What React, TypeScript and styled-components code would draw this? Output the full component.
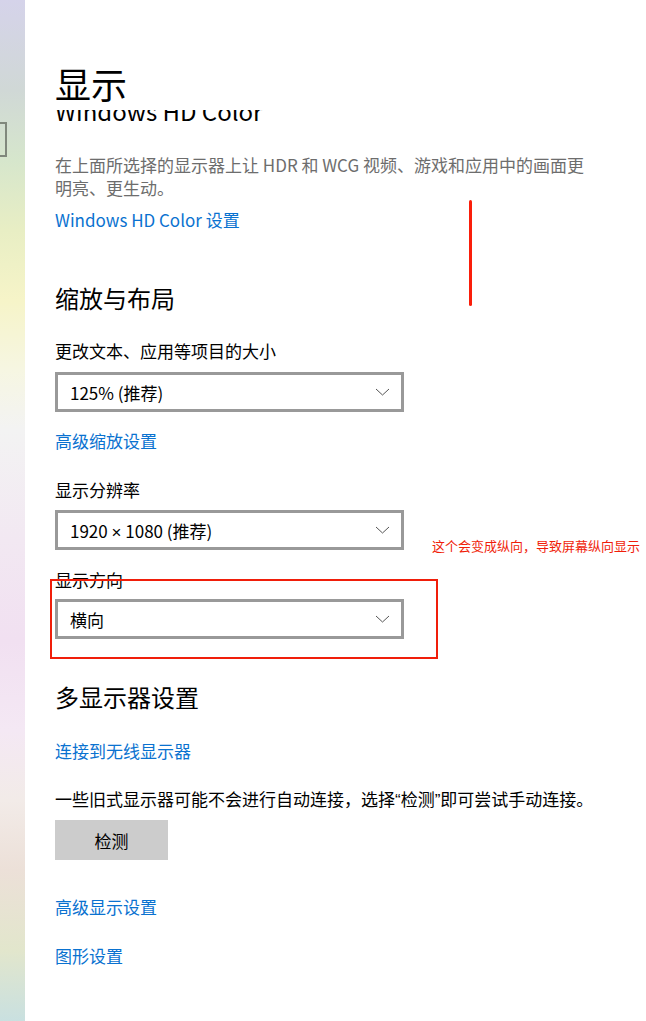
import React from "react";
import styled, { createGlobalStyle } from "styled-components";

const GlobalStyle = createGlobalStyle`
  html, body {
    margin: 0;
    padding: 0;
    background: #ffffff;
  }
  body {
    font-family: "Noto Sans CJK SC", "Liberation Sans", sans-serif;
    color: #000;
  }
`;

type SelectProps = { children: React.ReactNode; $mt: number };

const Chevron = () => (
  <svg width="15" height="8" viewBox="0 0 15 8">
    <polyline points="1,1 7.5,7 14,1" fill="none" stroke="#555" strokeWidth="1" />
  </svg>
);

const Dropdown = ({ children, $mt }: SelectProps) => (
  <Select $mt={$mt}>
    <span>{children}</span>
    <Chevron />
  </Select>
);

const App = () => {
  return (
    <Page>
      <GlobalStyle />
      <Wallpaper>
        <WindowEdge />
      </Wallpaper>
      <Main>
        <PageTitle>显示</PageTitle>
        <Viewport>
          <Content>
            <SectionTitle $mt={0}>Windows HD Color</SectionTitle>
            <Description $mt={26}>
              在上面所选择的显示器上让 HDR 和 WCG 视频、游戏和应用中的画面更明亮、更生动。
            </Description>
            <Link $mt={9}>Windows HD Color 设置</Link>

            <SectionTitle $mt={51}>缩放与布局</SectionTitle>
            <Label $mt={25}>更改文本、应用等项目的大小</Label>
            <Dropdown $mt={10}>125% (推荐)</Dropdown>
            <Link $mt={17}>高级缩放设置</Link>

            <Label $mt={26}>显示分辨率</Label>
            <Dropdown $mt={9}>
              1920 <Latin>×</Latin> 1080 (推荐)
            </Dropdown>

            <Label $mt={18}>显示方向</Label>
            <Dropdown $mt={8}>横向</Dropdown>

            <SectionTitle $mt={42}>多显示器设置</SectionTitle>
            <Link $mt={26}>连接到无线显示器</Link>
            <Label $mt={25}>
              一些旧式显示器可能不会进行自动连接，选择<Latin>“</Latin>检测<Latin>”</Latin>即可尝试手动连接。
            </Label>
            <Button $mt={8}>检测</Button>
            <Link $mt={35}>高级显示设置</Link>
            <Link $mt={26}>图形设置</Link>
          </Content>
        </Viewport>
      </Main>

      <RedLine />
      <Note>这个会变成纵向，导致屏幕纵向显示</Note>
      <Highlight />
    </Page>
  );
};

const Page = styled.div`
  position: relative;
  display: flex;
  width: 646px;
  height: 1021px;
  overflow: hidden;
  background: #fff;
`;

const Wallpaper = styled.div`
  position: relative;
  flex: none;
  width: 25px;
  background: linear-gradient(
    180deg,
    #d5d3ea 0px,
    #d0d8d6 90px,
    #d6e6cc 160px,
    #e8eec4 230px,
    #f6f4c8 300px,
    #f6f6e2 370px,
    #f3f3f3 430px,
    #f2e8f2 540px,
    #f1e0f1 640px,
    #f4e8f4 730px,
    #f2ebe8 800px,
    #ece0d8 870px,
    #e2e6cc 950px,
    #c9e0e0 1021px
  );
`;

const WindowEdge = styled.div`
  position: absolute;
  left: -10px;
  top: 122px;
  width: 13px;
  height: 31px;
  border: 2px solid #80887c;
`;

const Main = styled.div`
  flex: 1;
  display: flex;
  flex-direction: column;
  min-width: 0;
  padding-left: 30px;
  background: #fff;
`;

const PageTitle = styled.h1`
  margin: 0;
  padding: 62px 0 6px;
  font-size: 36px;
  line-height: 42px;
  font-weight: 400;
  color: #000;
`;

const Viewport = styled.div`
  flex: 1;
  overflow: hidden;
  padding-right: 30px;
`;

const Content = styled.div`
  display: flex;
  flex-direction: column;
  align-items: flex-start;
  margin-top: -15px;
`;

const SectionTitle = styled.h2<{ $mt: number }>`
  margin: ${(p) => p.$mt}px 0 0;
  font-size: 24px;
  line-height: 32px;
  font-weight: 400;
  color: #000;
`;

const Label = styled.div<{ $mt: number }>`
  margin-top: ${(p) => p.$mt}px;
  font-size: 17px;
  line-height: 23px;
  color: #000;
`;

const Description = styled(Label)`
  max-width: 540px;
  color: #6d6d6d;
`;

const Link = styled(Label)`
  color: #0a72d0;
  cursor: pointer;
`;

const Latin = styled.span`
  font-family: "Liberation Sans", sans-serif;
`;

const Select = styled.div<{ $mt: number }>`
  box-sizing: border-box;
  display: flex;
  align-items: center;
  justify-content: space-between;
  width: 349px;
  height: 40px;
  margin-top: ${(p) => p.$mt}px;
  padding: 0 11px 0 12px;
  border: 3px solid #999999;
  font-size: 17px;
  color: #000;
`;

const Button = styled.div<{ $mt: number }>`
  display: flex;
  align-items: center;
  justify-content: center;
  width: 113px;
  height: 40px;
  margin-top: ${(p) => p.$mt}px;
  background: #cccccc;
  font-size: 17px;
  color: #000;
`;

const RedLine = styled.div`
  position: absolute;
  left: 469px;
  top: 200px;
  width: 3px;
  height: 106px;
  border-radius: 2px;
  background: #fa1e0a;
`;

const Note = styled.div`
  position: absolute;
  left: 432px;
  top: 537px;
  font-size: 13px;
  line-height: 18px;
  color: #f01e0a;
  white-space: nowrap;
`;

const Highlight = styled.div`
  position: absolute;
  left: 50px;
  top: 579px;
  width: 384px;
  height: 76px;
  border: 2px solid #f01e0a;
`;

export default App;
